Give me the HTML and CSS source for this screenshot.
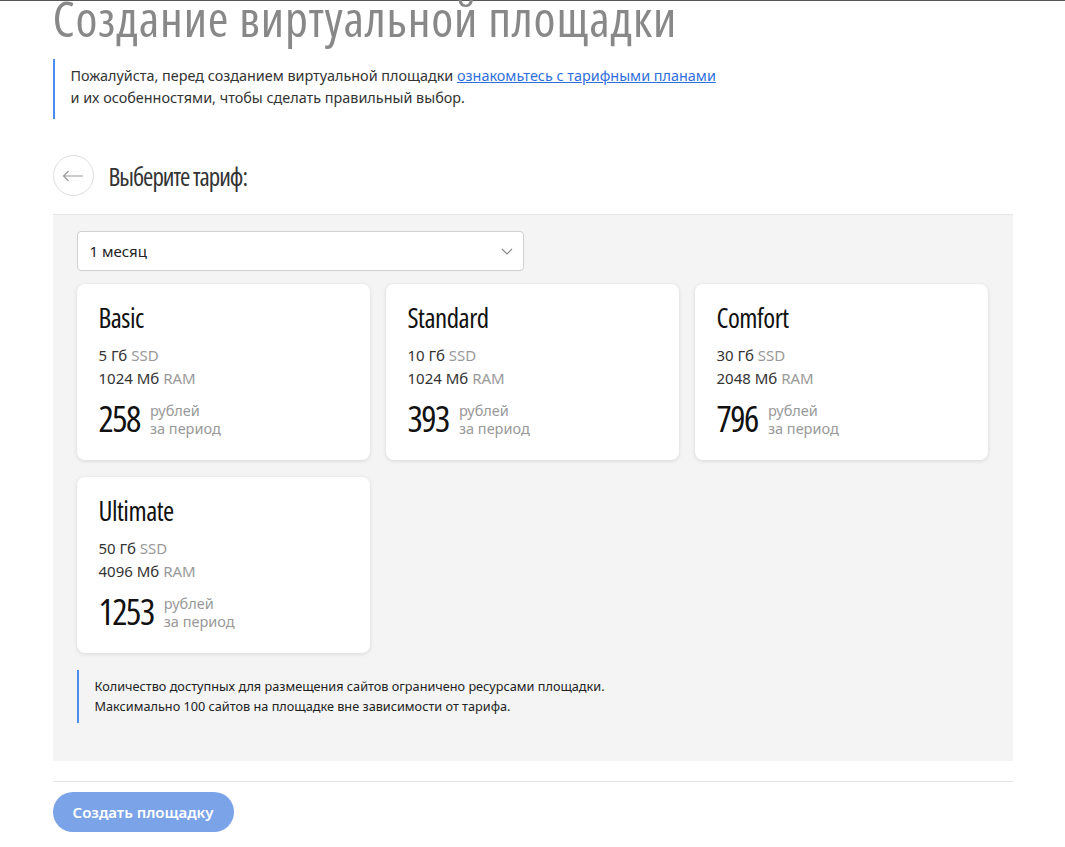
FILE: index.html
```html
<!DOCTYPE html>
<html lang="ru">
<head>
<meta charset="utf-8">
<link rel="stylesheet" href="styles.css">
</head>
<body>
<div class="topline"></div>
<main class="page">
  <h1 class="title">Создание виртуальной площадки</h1>
  <div class="intro">
    Пожалуйста, перед созданием виртуальной площадки <a href="#" class="link">ознакомьтесь с тарифными планами</a><br>
    и их особенностями, чтобы сделать правильный выбор.
  </div>
  <div class="step">
    <button class="back" type="button">
      <svg width="22" height="12" viewBox="0 0 22 12"><path d="M21 6H1.5M6.5 1L1.5 6l5 5" fill="none" stroke="#9a9a9a" stroke-width="1.2"/></svg>
    </button>
    <h2 class="step-title">Выберите тариф:</h2>
  </div>
  <section class="panel">
    <div class="select">
      <span>1 месяц</span>
      <svg width="12" height="7" viewBox="0 0 12 7"><path d="M1 1l5 5 5-5" fill="none" stroke="#888" stroke-width="1.1"/></svg>
    </div>
    <div class="cards">
      <div class="card">
        <div class="card-name">Basic</div>
        <div class="spec">5 Гб <span class="muted">SSD</span></div>
        <div class="spec">1024 Мб <span class="muted">RAM</span></div>
        <div class="price"><span class="amount">258</span><span class="per">рублей<br>за период</span></div>
      </div>
      <div class="card">
        <div class="card-name">Standard</div>
        <div class="spec">10 Гб <span class="muted">SSD</span></div>
        <div class="spec">1024 Мб <span class="muted">RAM</span></div>
        <div class="price"><span class="amount">393</span><span class="per">рублей<br>за период</span></div>
      </div>
      <div class="card">
        <div class="card-name">Comfort</div>
        <div class="spec">30 Гб <span class="muted">SSD</span></div>
        <div class="spec">2048 Мб <span class="muted">RAM</span></div>
        <div class="price"><span class="amount">796</span><span class="per">рублей<br>за период</span></div>
      </div>
      <div class="card">
        <div class="card-name">Ultimate</div>
        <div class="spec">50 Гб <span class="muted">SSD</span></div>
        <div class="spec">4096 Мб <span class="muted">RAM</span></div>
        <div class="price"><span class="amount">1253</span><span class="per">рублей<br>за период</span></div>
      </div>
    </div>
    <div class="note">
      Количество доступных для размещения сайтов ограничено ресурсами площадки.<br>
      Максимально 100 сайтов на площадке вне зависимости от тарифа.
    </div>
  </section>
  <div class="actions">
    <button class="create" type="button">Создать площадку</button>
  </div>
</main>
</body>
</html>
```

FILE: styles.css
```css
html, body {
  margin: 0;
  padding: 0;
  background: #fff;
}
body {
  font-family: "Noto Sans", "Open Sans", sans-serif;
  color: #333;
}
.topline {
  height: 1px;
  background: #555;
}
.page {
  width: 960px;
  margin: 0 auto;
}
.title {
  margin: -13px 0 0;
  font-family: "Open Sans", sans-serif;
  font-stretch: 75%;
  font-weight: 500;
  font-size: 50px;
  line-height: 60px;
  letter-spacing: 0.8px;
  color: #888;
  white-space: nowrap;
}
.intro {
  margin-top: 11px;
  border-left: 2px solid #4a8cf0;
  padding: 6px 0 10px 16px;
  font-size: 14.4px;
  line-height: 22px;
  color: #333;
}
.link {
  color: #2f6fdc;
}
.step {
  display: flex;
  align-items: center;
  gap: 15px;
  margin-top: 36px;
  height: 41px;
}
.back {
  width: 41px;
  height: 41px;
  border-radius: 50%;
  border: 1px solid #ddd;
  background: #fff;
  display: flex;
  align-items: center;
  justify-content: center;
  padding: 0;
}
.step-title {
  margin: 0;
  font-family: "Open Sans", sans-serif;
  font-stretch: 75%;
  font-weight: 500;
  font-size: 25px;
  line-height: 32px;
  letter-spacing: -1px;
  color: #333;
}
.panel {
  margin-top: 18px;
  background: #f4f4f4;
  border-top: 1px solid #e6e6e6;
  padding: 16px 24px 38px;
}
.select {
  width: 447px;
  height: 40px;
  box-sizing: border-box;
  background: #fff;
  border: 1px solid #cfcfcf;
  border-radius: 4px;
  display: flex;
  align-items: center;
  justify-content: space-between;
  padding: 0 10px 0 12px;
  font-size: 15px;
  color: #222;
}
.cards {
  margin-top: 13px;
  display: grid;
  grid-template-columns: repeat(3, 293px);
  column-gap: 16px;
  row-gap: 17px;
}
.card {
  background: #fff;
  border-radius: 8px;
  box-shadow: 0 1px 4px rgba(0, 0, 0, 0.12);
  height: 176px;
  box-sizing: border-box;
  padding: 18px 22px 0;
}
.card-name {
  font-family: "Open Sans", sans-serif;
  font-stretch: 75%;
  font-weight: 500;
  font-size: 27px;
  line-height: 32px;
  letter-spacing: -0.5px;
  color: #111;
  margin-bottom: 10px;
}
.spec {
  font-size: 15px;
  line-height: 23px;
  color: #333;
}
.muted {
  color: #999;
}
.price {
  display: flex;
  align-items: center;
  gap: 10px;
  margin-top: 11px;
}
.amount {
  font-family: "Open Sans", sans-serif;
  font-stretch: 75%;
  font-weight: 500;
  font-size: 36px;
  line-height: 36px;
  letter-spacing: -1.5px;
  color: #111;
}
.per {
  font-size: 14.5px;
  line-height: 18px;
  color: #999;
}
.note {
  margin-top: 17px;
  border-left: 2px solid #4a8cf0;
  padding: 6px 0 7px 16px;
  font-size: 12.7px;
  line-height: 20px;
  color: #222;
}
.actions {
  margin-top: 20px;
  border-top: 1px solid #e3e3e3;
  padding-top: 10px;
}
.create {
  height: 40px;
  padding: 0 20px;
  border: none;
  border-radius: 20px;
  background: #7ba3e8;
  color: #fff;
  font-family: "Noto Sans", sans-serif;
  font-size: 15px;
  font-weight: 600;
}
```
